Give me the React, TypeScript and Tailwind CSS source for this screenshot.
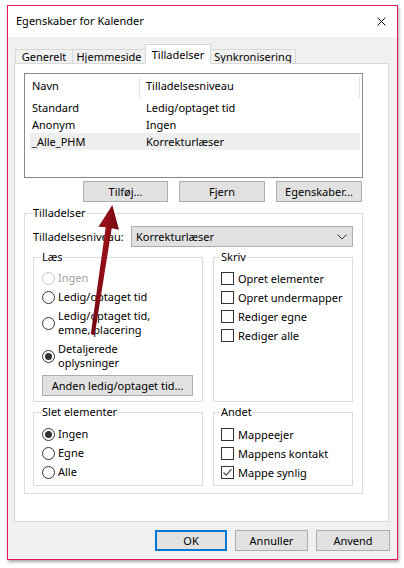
import React from 'react';

const font = { fontFamily: '"Noto Sans", "Open Sans", Arial, sans-serif' };

function Radio({ checked, disabled }: { checked?: boolean; disabled?: boolean }) {
  return (
    <span
      className={`flex h-[13px] w-[13px] shrink-0 items-center justify-center rounded-full border bg-white ${
        disabled ? 'border-[#c4c4c4]' : 'border-[#333333]'
      }`}
    >
      {checked && <span className="h-[7px] w-[7px] rounded-full bg-[#333333]" />}
    </span>
  );
}

function Check({ checked }: { checked?: boolean }) {
  return (
    <span className="flex h-[13px] w-[13px] shrink-0 items-center justify-center border border-[#333333] bg-white">
      {checked && (
        <svg width="11" height="11" viewBox="0 0 11 11">
          <path d="M1.5 5.5 L4.2 8.2 L9.5 2.2" fill="none" stroke="#444" strokeWidth="1.1" />
        </svg>
      )}
    </span>
  );
}

function RadioRow({ lines, checked, disabled }: { lines: string[]; checked?: boolean; disabled?: boolean }) {
  return (
    <div className="flex items-center gap-[3px]">
      <Radio checked={checked} disabled={disabled} />
      <div className={`leading-[14px] ${disabled ? 'text-[#a0a0a0]' : 'text-black'}`}>
        {lines.map((l) => (
          <div key={l}>{l}</div>
        ))}
      </div>
    </div>
  );
}

function CheckRow({ label, checked }: { label: string; checked?: boolean }) {
  return (
    <div className="flex items-center gap-[4px]">
      <Check checked={checked} />
      <span className="leading-[13px]">{label}</span>
    </div>
  );
}

function Btn({ label, w, primary }: { label: string; w: string; primary?: boolean }) {
  return (
    <div
      className={`flex h-[21px] items-center justify-center bg-[#e1e1e1] leading-[13px] ${w} ${
        primary ? 'border-2 border-[#0078d7]' : 'border border-[#adadad]'
      }`}
    >
      {label}
    </div>
  );
}

function Legend({ children }: { children: React.ReactNode }) {
  return <legend className="ml-[-1px] px-[1px] leading-[16px]">{children}</legend>;
}

export default function App() {
  return (
    <div className="relative h-[568px] w-[404px] bg-white pl-[7px] pt-[5px] text-[11px] text-black" style={font}>
      <div className="flex h-[555px] w-[391px] flex-col border border-[#e3165f] shadow-[1px_2px_3px_rgba(0,0,0,0.35)]">
        {/* title bar */}
        <div className="flex h-[31px] items-center justify-between bg-white pl-[8px] pr-[11px]">
          <span className="text-[11px]">Egenskaber for Kalender</span>
          <svg width="9" height="9" viewBox="0 0 9 9">
            <path d="M0.5 0.5 L8.5 8.5 M8.5 0.5 L0.5 8.5" stroke="#111" strokeWidth="1" />
          </svg>
        </div>

        {/* body */}
        <div className="flex flex-1 flex-col bg-[#f0f0f0] pt-[7px]">
          {/* tabs */}
          <div className="flex items-end pl-[7px]">
            <div className="flex h-[14px] w-[58px] items-center justify-center border border-b-0 border-[#d9d9d9] leading-[13px]">Generelt</div>
            <div className="ml-[-1px] flex h-[14px] w-[74px] items-center justify-center border border-b-0 border-[#d9d9d9] leading-[13px]">Hjemmeside</div>
            <div className="relative z-10 mb-[-1px] ml-[-1px] flex h-[20px] w-[66px] items-start justify-center border border-b-0 border-[#d9d9d9] bg-white pt-[3px] leading-[13px]">Tilladelser</div>
            <div className="ml-[-1px] flex h-[14px] w-[86px] items-center justify-center border border-b-0 border-[#d9d9d9] leading-[13px]">Synkronisering</div>
          </div>

          {/* panel */}
          <div className="ml-[6px] flex h-[459px] w-[375px] flex-col border border-[#d9d9d9] bg-white pl-[9px] pt-[9px]">
            {/* list */}
            <div className="flex h-[105px] w-[339px] flex-col border border-[#828790] bg-white">
              <div className="flex h-[25px] items-center">
                <div className="flex h-[22px] w-[114px] items-center pl-[7px]">Navn</div>
                <div className="h-[22px] w-px bg-[#e5e5e5]" />
                <div className="flex h-[22px] w-[219px] items-center pl-[6px]">Tilladelsesniveau</div>
                <div className="h-[22px] w-px bg-[#e5e5e5]" />
              </div>
              {[
                ['Standard', 'Ledig/optaget tid', false],
                ['Anonym', 'Ingen', false],
                ['_Alle_PHM', 'Korrekturlæser', true],
              ].map(([a, b, sel]) => (
                <div
                  key={a as string}
                  className={`ml-[5px] flex h-[17px] w-[330px] items-center pl-[2px] leading-[13px] ${sel ? 'bg-[#eeeeee]' : ''}`}
                >
                  <span className="w-[114px]">{a}</span>
                  <span>{b}</span>
                </div>
              ))}
            </div>

            {/* list buttons */}
            <div className="mt-[3px] flex w-[338px] justify-end gap-[11px]">
              <Btn label="Tilføj..." w="w-[85px]" />
              <Btn label="Fjern" w="w-[86px]" />
              <Btn label="Egenskaber..." w="w-[86px]" />
            </div>

            {/* Tilladelser group */}
            <fieldset className="mt-[3px] w-[339px] border border-[#dcdcdc] pb-[7px] pl-[8px] pr-[9px]">
              <Legend>Tilladelser</Legend>
              <div className="mt-[5px] flex items-center justify-between">
                <span className="leading-[13px]">Tilladelsesniveau:</span>
                <div className="flex h-[21px] w-[222px] items-center justify-between border border-[#adadad] bg-[#e1e1e1] pl-[4px] pr-[5px]">
                  <span className="leading-[13px]">Korrekturlæser</span>
                  <svg width="10" height="6" viewBox="0 0 10 6">
                    <path d="M0.5 0.5 L5 5 L9.5 0.5" fill="none" stroke="#333" strokeWidth="1" />
                  </svg>
                </div>
              </div>

              <div className="mt-[2px] flex gap-[10px]">
                <fieldset className="w-[170px] border border-[#dcdcdc] pb-[5px] pl-[8px]">
                  <Legend>Læs</Legend>
                  <div className="flex flex-col gap-[5px] pt-[6px]">
                    <RadioRow lines={['Ingen']} disabled />
                    <RadioRow lines={['Ledig/optaget tid']} />
                    <RadioRow lines={['Ledig/optaget tid,', 'emne, placering']} />
                    <RadioRow lines={['Detaljerede', 'oplysninger']} checked />
                    <Btn label="Anden ledig/optaget tid..." w="w-[151px]" />
                  </div>
                </fieldset>
                <fieldset className="flex-1 border border-[#dcdcdc] pl-[7px]">
                  <Legend>Skriv</Legend>
                  <div className="flex flex-col gap-[6px] pt-[7px]">
                    <CheckRow label="Opret elementer" />
                    <CheckRow label="Opret undermapper" />
                    <CheckRow label="Rediger egne" />
                    <CheckRow label="Rediger alle" />
                  </div>
                </fieldset>
              </div>

              <div className="mt-[2px] flex gap-[10px]">
                <fieldset className="w-[170px] border border-[#dcdcdc] pb-[6px] pl-[8px]">
                  <Legend>Slet elementer</Legend>
                  <div className="flex flex-col gap-[5px] pt-[7px]">
                    <RadioRow lines={['Ingen']} checked />
                    <RadioRow lines={['Egne']} />
                    <RadioRow lines={['Alle']} />
                  </div>
                </fieldset>
                <fieldset className="flex-1 border border-[#dcdcdc] pb-[6px] pl-[7px]">
                  <Legend>Andet</Legend>
                  <div className="flex flex-col gap-[6px] pt-[8px]">
                    <CheckRow label="Mappeejer" />
                    <CheckRow label="Mappens kontakt" />
                    <CheckRow label="Mappe synlig" checked />
                  </div>
                </fieldset>
              </div>
            </fieldset>
          </div>

          {/* dialog buttons */}
          <div className="mt-[8px] flex justify-end gap-[8px] pr-[7px]">
            <Btn label="OK" w="w-[72px]" primary />
            <Btn label="Annuller" w="w-[73px]" />
            <Btn label="Anvend" w="w-[74px]" />
          </div>
        </div>
      </div>

      {/* annotation arrow */}
      <svg className="pointer-events-none absolute left-0 top-0" width="404" height="568" viewBox="0 0 404 568">
        <defs>
          <linearGradient id="ar" x1="0" y1="0" x2="1" y2="0">
            <stop offset="0" stopColor="#6e0710" />
            <stop offset="0.5" stopColor="#9a1019" />
            <stop offset="1" stopColor="#6e0710" />
          </linearGradient>
        </defs>
        <path
          d="M91 332.7 L105.7 227.3 L98.5 226.8 L112.3 205 L119 229.8 L111.7 228.3 L95 333.3 Z"
          fill="url(#ar)"
        />
        <circle cx="93" cy="333" r="2" fill="#7a0811" />
      </svg>
    </div>
  );
}
